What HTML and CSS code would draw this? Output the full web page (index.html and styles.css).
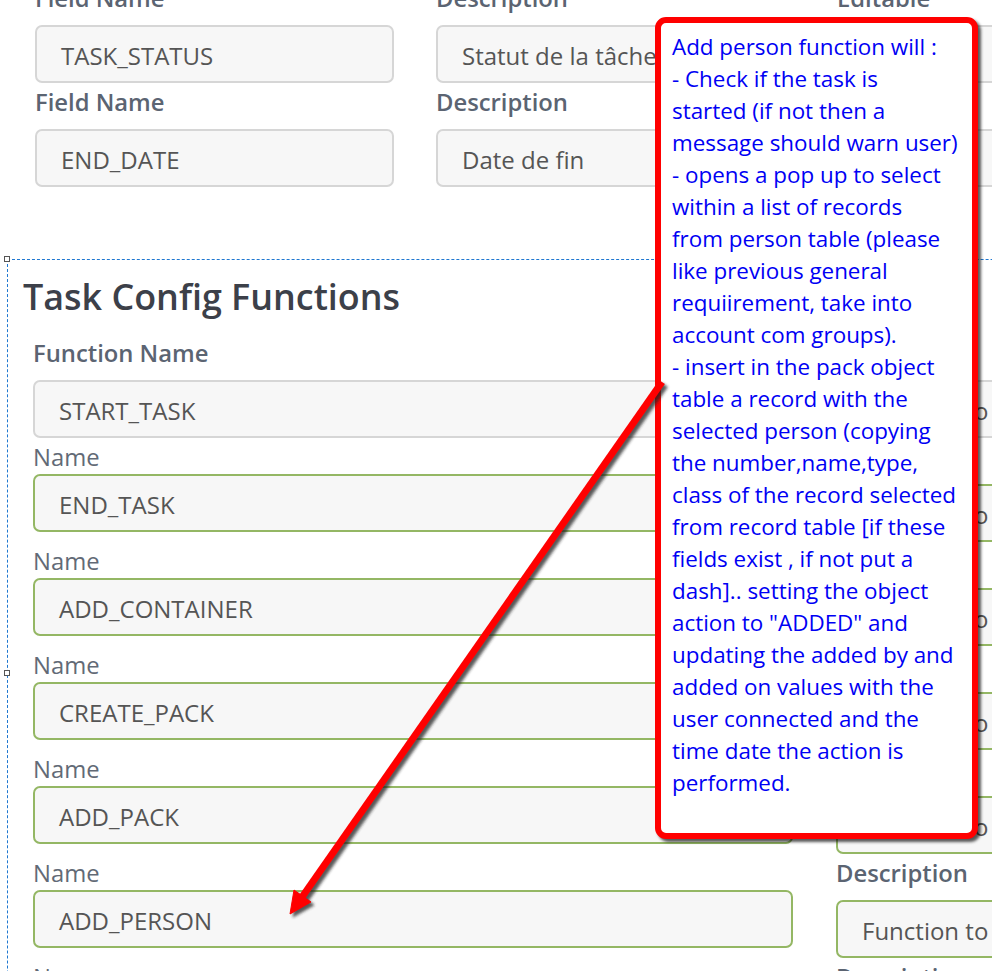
FILE: index.html
```html
<!DOCTYPE html>
<html>
<head>
<meta charset="utf-8">
<link rel="stylesheet" href="styles.css">
</head>
<body>
<div class="viewport">
  <div class="fields-top">
    <div class="field">
      <div class="lbl bold">Field Name</div>
      <div class="input gray">TASK_STATUS</div>
    </div>
    <div class="field">
      <div class="lbl bold">Description</div>
      <div class="input gray">Statut de la tâche</div>
    </div>
    <div class="field">
      <div class="lbl bold">Editable</div>
      <div class="input gray"></div>
    </div>
    <div class="field">
      <div class="lbl bold">Field Name</div>
      <div class="input gray">END_DATE</div>
    </div>
    <div class="field">
      <div class="lbl bold">Description</div>
      <div class="input gray">Date de fin</div>
    </div>
    <div class="field">
      <div class="lbl bold">Editable</div>
      <div class="input gray"></div>
    </div>
  </div>

  <section class="config">
    <span class="handle handle-top"></span>
    <span class="handle handle-mid"></span>
    <h2 class="config-title">Task Config Functions</h2>
    <div class="cols">
      <div class="col">
        <div class="lbl bold">Function Name</div>
        <div class="input gray">START_TASK</div>
        <div class="lbl name">Name</div>
        <div class="input green spaced">END_TASK</div>
        <div class="lbl name">Name</div>
        <div class="input green spaced">ADD_CONTAINER</div>
        <div class="lbl name">Name</div>
        <div class="input green spaced">CREATE_PACK</div>
        <div class="lbl name">Name</div>
        <div class="input green spaced">ADD_PACK</div>
        <div class="lbl name">Name</div>
        <div class="input green spaced">ADD_PERSON</div>
        <div class="lbl name">Name</div>
        <div class="input green spaced">ADD_OBJECT</div>
      </div>
      <div class="col">
        <div class="lbl bold">Description</div>
        <div class="input gray">Function to start the task</div>
        <div class="lbl bold">Description</div>
        <div class="input green">Function to end the task</div>
        <div class="lbl bold">Description</div>
        <div class="input green">Function to add a container</div>
        <div class="lbl bold">Description</div>
        <div class="input green">Function to create a pack</div>
        <div class="lbl bold">Description</div>
        <div class="input green">Function to add a pack</div>
        <div class="lbl bold">Description</div>
        <div class="input green">Function to add a person</div>
        <div class="lbl bold">Description</div>
        <div class="input green">Function to add an object</div>
      </div>
    </div>
  </section>

  <div class="callout">
    <span class="cl">Add person function will :</span>
    <span class="cl">- Check if the task is</span>
    <span class="cl">started (if not then a</span>
    <span class="cl">message should warn user)</span>
    <span class="cl">- opens a pop up to select</span>
    <span class="cl">within a list of records</span>
    <span class="cl">from person table (please</span>
    <span class="cl">like previous general</span>
    <span class="cl">requiirement, take into</span>
    <span class="cl">account com groups).</span>
    <span class="cl">- insert in the pack object</span>
    <span class="cl">table a record with the</span>
    <span class="cl">selected person (copying</span>
    <span class="cl">the number,name,type,</span>
    <span class="cl">class of the record selected</span>
    <span class="cl">from record table [if these</span>
    <span class="cl">fields exist , if not put a</span>
    <span class="cl">dash].. setting the object</span>
    <span class="cl">action to "ADDED" and</span>
    <span class="cl">updating the added by and</span>
    <span class="cl">added on values with the</span>
    <span class="cl">user connected and the</span>
    <span class="cl">time date the action is</span>
    <span class="cl">performed.</span>
  </div>

  <svg class="arrow" width="992" height="971" viewBox="0 0 992 971">
    <defs>
      <filter id="sh" x="-20%" y="-20%" width="140%" height="140%">
        <feGaussianBlur stdDeviation="1.6"/>
      </filter>
    </defs>
    <g transform="translate(3,3)" filter="url(#sh)" fill="#222" stroke="#222" opacity="0.75">
      <line x1="662" y1="382" x2="300" y2="900" stroke-width="7"/>
      <polygon points="290,914 311,902 294,890"/>
    </g>
    <g fill="#ff0000" stroke="#ff0000">
      <line x1="662" y1="382" x2="300" y2="900" stroke-width="7"/>
      <polygon points="290,914 311,902 294,890"/>
    </g>
  </svg>
</div>
</body>
</html>
```

FILE: styles.css
```css
html, body {
  margin: 0;
  padding: 0;
  background: #ffffff;
}

.viewport {
  position: relative;
  width: 992px;
  height: 971px;
  overflow: hidden;
  font-family: "Open Sans", "Noto Sans", sans-serif;
}

.fields-top {
  display: grid;
  grid-template-columns: 359px 359px 359px;
  column-gap: 42px;
  margin-top: -21px;
  margin-left: 35px;
  width: 1200px;
}

.field {
  display: flex;
  flex-direction: column;
}

.lbl {
  line-height: 28px;
  white-space: nowrap;
}

.lbl.bold {
  font-size: 23.8px;
  font-weight: 600;
  color: #5b6472;
  margin: 5px 0 13px;
}

.lbl.name {
  font-size: 23.8px;
  font-weight: 400;
  color: #626a76;
  margin: 5px 0 3px;
}

.input {
  box-sizing: border-box;
  height: 58px;
  border: 2px solid #d6d6d6;
  border-radius: 7px;
  background: #f7f7f7;
  padding: 4px 0 0 24px;
  font-size: 24px;
  line-height: 50px;
  color: #555555;
  white-space: nowrap;
  overflow: hidden;
}

.input.green {
  border-color: #94b764;
}

.input.spaced {
  margin-bottom: 10px;
}

.config {
  position: relative;
  margin-top: 72px;
  margin-left: 7px;
  width: 1400px;
  height: 900px;
  border-top: 1px dashed #1f78d1;
  border-left: 1px dashed #1f78d1;
  padding: 14px 0 0 15px;
}

.handle {
  position: absolute;
  width: 4px;
  height: 4px;
  border: 1px solid #555555;
  background: #ffffff;
}

.handle-top {
  left: -4px;
  top: -4px;
}

.handle-mid {
  left: -4px;
  top: 410px;
}

.config-title {
  margin: 0;
  font-size: 35.9px;
  font-weight: 600;
  line-height: 46px;
  color: #3c4049;
}

.cols {
  display: grid;
  grid-template-columns: 760px 760px;
  column-gap: 43px;
  margin: 14px 0 0 10px;
}

.col {
  display: flex;
  flex-direction: column;
}

.callout {
  position: absolute;
  left: 655px;
  top: 17px;
  width: 300px;
  height: 802px;
  border: 6px solid #ff0000;
  border-radius: 11px;
  background: #ffffff;
  box-shadow: 3px 3px 3px rgba(0, 0, 0, 0.65);
  padding: 8px 0 0 11px;
  box-sizing: content-box;
  font-family: "Open Sans", "Noto Sans", sans-serif;
  font-size: 22.4px;
  line-height: 32px;
  color: #0000f4;
}

.cl {
  display: block;
  white-space: nowrap;
}

.arrow {
  position: absolute;
  left: 0;
  top: 0;
  pointer-events: none;
}
```
